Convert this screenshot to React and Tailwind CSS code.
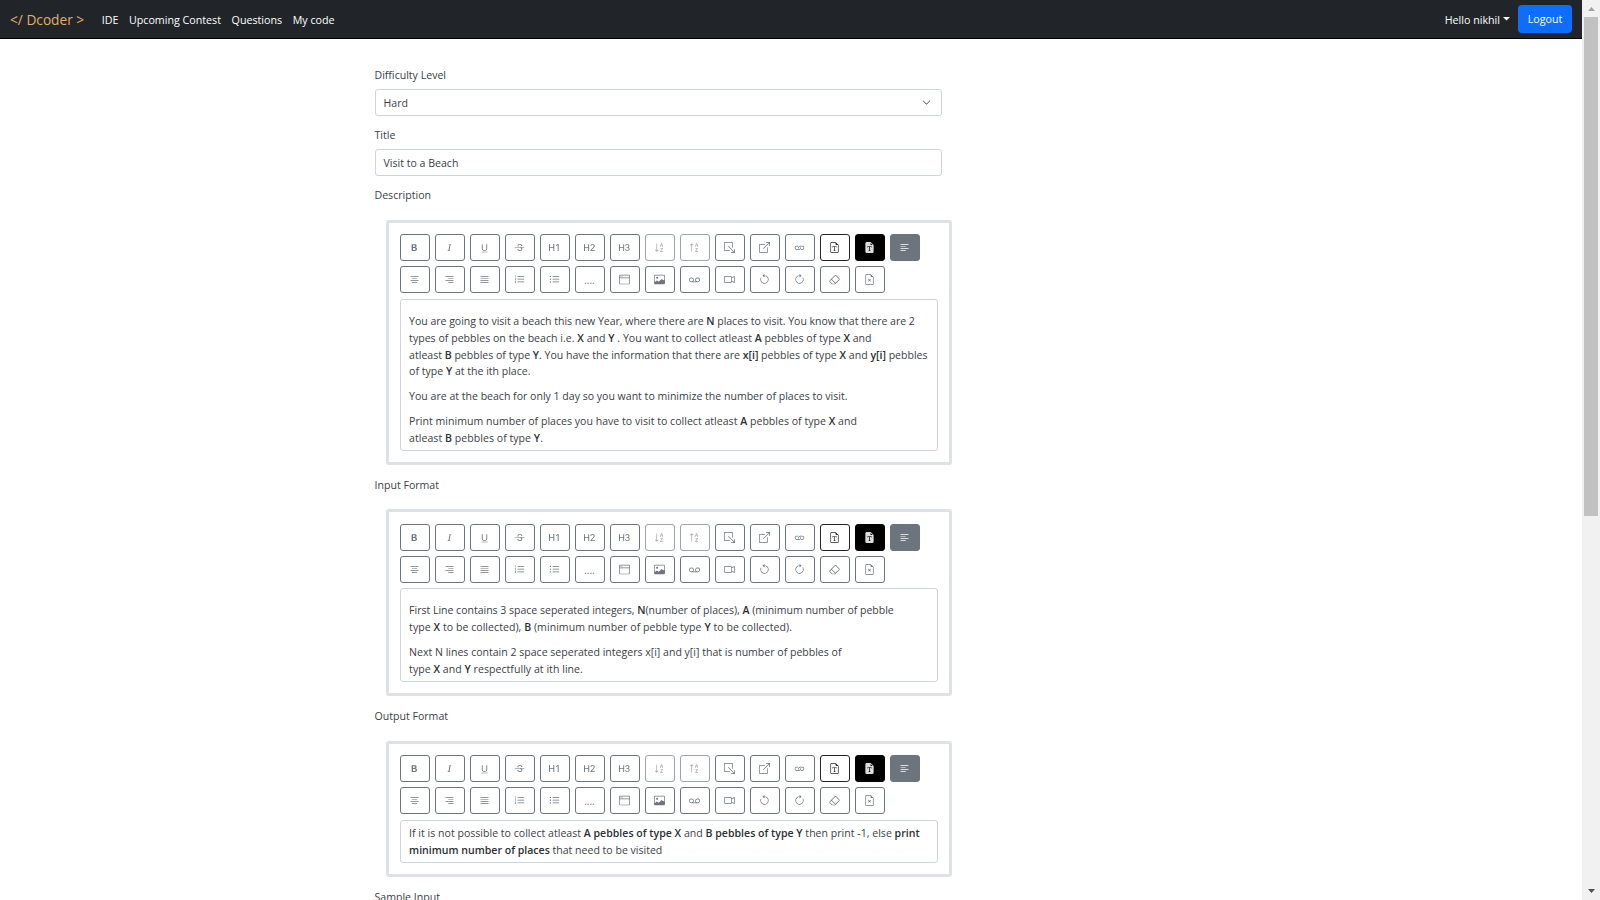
import {
  BsTypeBold, BsTypeItalic, BsTypeUnderline, BsTypeStrikethrough, BsTypeH1, BsTypeH2, BsTypeH3,
  BsSortAlphaDown, BsSortAlphaUp, BsBoxArrowDownRight, BsBoxArrowUpRight, BsLink, BsFileEarmarkFont,
  BsFileEarmarkFontFill, BsTextLeft, BsTextCenter, BsTextRight, BsJustify, BsListOl, BsListUl,
  BsWindow, BsImage, BsVoicemail, BsCameraVideo, BsArrowCounterclockwise, BsArrowClockwise,
  BsEraser, BsFileEarmarkX, BsChevronDown,
} from "react-icons/bs";

const outline = "border-[#6c757d] text-[#6c757d]";
const faded = "border-[#6c757d] text-[#6c757d] opacity-65";

const firstRow = [
  [BsTypeBold, outline], [BsTypeItalic, outline], [BsTypeUnderline, outline], [BsTypeStrikethrough, outline],
  [BsTypeH1, outline], [BsTypeH2, outline], [BsTypeH3, outline],
  [BsSortAlphaDown, faded], [BsSortAlphaUp, faded],
  [BsBoxArrowDownRight, outline], [BsBoxArrowUpRight, outline], [BsLink, outline],
  [BsFileEarmarkFont, "border-[#212529] text-[#212529]"],
  [BsFileEarmarkFontFill, "border-black bg-black text-[#dddddd]"],
  [BsTextLeft, "border-[#6c757d] bg-[#6c757d] text-white"],
];

const secondRow = [
  [BsTextCenter, outline], [BsTextRight, outline], [BsJustify, outline], [BsListOl, outline], [BsListUl, outline],
  [null, outline], [BsWindow, outline], [BsImage, outline], [BsVoicemail, outline], [BsCameraVideo, outline],
  [BsArrowCounterclockwise, outline], [BsArrowClockwise, outline], [BsEraser, outline], [BsFileEarmarkX, outline],
];

function ToolRow({ items }) {
  return (
    <div className="flex gap-[5px]">
      {items.map(([Icon, tone], i) => (
        <button key={i} className={`flex h-[27px] w-[30px] items-center justify-center rounded-[3px] border text-[11px] ${tone}`}>
          {Icon ? <Icon /> : <span className="pt-[2px] text-[10px]">....</span>}
        </button>
      ))}
    </div>
  );
}

function Editor({ className, bodyClassName, children }) {
  return (
    <div className={`ml-[11px] w-[566px] rounded-[3px] border-3 border-[#dee2e6] px-[11px] ${className}`}>
      <div className="flex flex-col gap-[5px]">
        <ToolRow items={firstRow} />
        <ToolRow items={secondRow} />
        <div className={`w-[538px] rounded-[3px] border border-[#ced4da] px-[8.6px] pb-[3.6px] text-[10.56px] leading-[16.67px] whitespace-nowrap ${bodyClassName}`}>
          {children}
        </div>
      </div>
    </div>
  );
}

function Label({ children }) {
  return <div className="h-[17px] leading-[17px]">{children}</div>;
}

const B = ({ children }) => <b className="font-semibold text-[#2b2f34]">{children}</b>;

function Navbar() {
  return (
    <nav className="flex h-[39px] items-center border-b border-black bg-[#212529] pr-[10px] pl-[10px] text-[10.7px] text-white">
      <span className="pt-[2px] text-[13.7px] text-[#e3ae66]">&lt;/ Dcoder &gt;</span>
      <div className="ml-[17.5px] flex gap-[10.6px] pt-[2px] font-medium">
        <span>IDE</span>
        <span>Upcoming Contest</span>
        <span>Questions</span>
        <span>My code</span>
      </div>
      <div className="ml-auto flex items-center font-medium">
        <span className="pt-[2px]">Hello nikhil</span>
        <svg className="ml-[3px] h-[4px] w-[7px]" viewBox="0 0 7 4"><path d="M0 0h7L3.5 3.6z" fill="currentColor" /></svg>
        <button className="ml-[8px] h-[28px] w-[54px] rounded-[4px] bg-[#0d6efd] pt-px">Logout</button>
      </div>
    </nav>
  );
}

function Scrollbar() {
  return (
    <div className="flex h-full w-[18px] flex-col items-center bg-[#f1f1f1]">
      <svg className="h-[17px] w-[17px] shrink-0" viewBox="0 0 17 17"><path d="M5 11h7L8.5 7z" fill="#a3a3a3" /></svg>
      <div className="h-[499px] w-[14px] bg-[#c1c1c1]" />
      <svg className="mt-auto h-[17px] w-[17px] shrink-0" viewBox="0 0 17 17"><path d="M5 6h7L8.5 10z" fill="#505050" /></svg>
    </div>
  );
}

export default function App() {
  return (
    <div className="flex h-[900px] w-[1600px] overflow-hidden bg-white font-['Open_Sans',sans-serif] text-[#3b4045]">
      <div className="w-[1582px] overflow-hidden">
        <Navbar />
        <main className="ml-[374.5px] w-[578px] pt-[28px] text-[10.58px]">
          <Label>Difficulty Level</Label>
          <div className="mt-[5px] flex h-[27px] w-[567px] items-center justify-between rounded-[3px] border border-[#ced4da] px-[8px]">
            <span className="pt-[2px]">Hard</span>
            <BsChevronDown className="mr-[2px] text-[9px]" />
          </div>
          <div className="h-[11px]" />
          <Label>Title</Label>
          <div className="mt-[5px] flex h-[27px] w-[567px] items-center rounded-[3px] border border-[#ced4da] px-[8px] pt-[2px]">Visit to a Beach</div>
          <div className="h-[11px]" />
          <Label>Description</Label>
          <Editor className="mt-[16px] h-[245px] pt-[11px]" bodyClassName="mt-px pt-[5px]">
            <p className="mt-[8.33px] tracking-[-0.028px]">You are going to visit a beach this new Year, where there are <B>N</B> places to visit. You know that there are 2</p>
            <p className="tracking-[0.027px]">types of pebbles on the beach i.e. <B>X</B> and <B>Y</B> . You want to collect atleast <B>A</B> pebbles of type <B>X</B> and</p>
            <p>atleast <B>B</B> pebbles of type <B>Y</B>. You have the information that there are <B>x[i]</B> pebbles of type <B>X</B> and <B>y[i]</B> pebbles</p>
            <p>of type <B>Y</B> at the ith place.</p>
            <p className="mt-[8.33px]">You are at the beach for only 1 day so you want to minimize the number of places to visit.</p>
            <p className="mt-[8.33px] tracking-[0.02px]">Print minimum number of places you have to visit to collect atleast <B>A</B> pebbles of type <B>X</B> and</p>
            <p className="tracking-[0.04px]">atleast <B>B</B> pebbles of type <B>Y</B>.</p>
          </Editor>
          <div className="h-[12px]" />
          <Label>Input Format</Label>
          <Editor className="mt-[15px] h-[187px] pt-[12px]" bodyClassName="pt-[5px]">
            <p className="mt-[8.33px] tracking-[-0.02px]">First Line contains 3 space seperated integers, <B>N</B>(number of places), <B>A</B> (minimum number of pebble</p>
            <p className="tracking-[0.048px]">type <B>X</B> to be collected), <B>B</B> (minimum number of pebble type <B>Y</B> to be collected).</p>
            <p className="mt-[8.33px]">Next N lines contain 2 space seperated integers x[i] and y[i] that is number of pebbles of</p>
            <p className="tracking-[0.04px]">type <B>X</B> and <B>Y</B> respectfully at ith line.</p>
          </Editor>
          <div className="h-[12px]" />
          <Label>Output Format</Label>
          <Editor className="mt-[16px] h-[136px] pt-[11px]" bodyClassName="mt-px pt-[4.4px]">
            <p className="tracking-[0.015px]">If it is not possible to collect atleast <B>A pebbles of type X</B> and <B>B pebbles of type Y</B> then print -1, else <B>print</B></p>
            <p><B>minimum number of places</B> that need to be visited</p>
          </Editor>
          <div className="h-[12px]" />
          <Label>Sample Input</Label>
        </main>
      </div>
      <Scrollbar />
    </div>
  );
}
